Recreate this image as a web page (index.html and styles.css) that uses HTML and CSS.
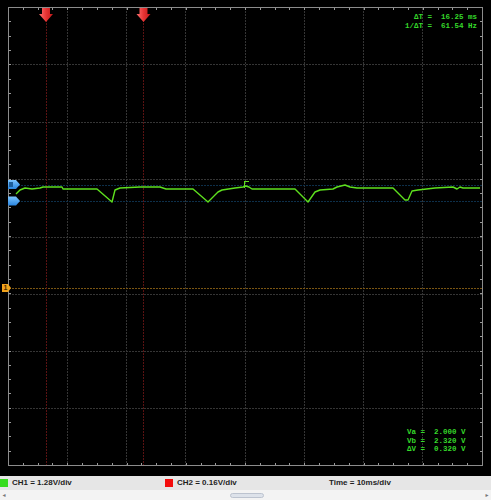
FILE: index.html
```html
<!DOCTYPE html>
<html>
<head>
<meta charset="utf-8">
<link rel="stylesheet" href="styles.css">
</head>
<body>
<div class="app">
  <div class="scope">
    <svg class="screen" width="491" height="476" viewBox="0 0 491 476" xmlns="http://www.w3.org/2000/svg">
      <defs>
        <linearGradient id="red" x1="0" y1="0" x2="1" y2="0">
          <stop offset="0" stop-color="#ff7070"/>
          <stop offset="0.5" stop-color="#e83434"/>
          <stop offset="1" stop-color="#c01818"/>
        </linearGradient>
        <linearGradient id="blue" x1="0" y1="0" x2="0" y2="1">
          <stop offset="0" stop-color="#7cc4ff"/>
          <stop offset="1" stop-color="#2a86e0"/>
        </linearGradient>
      </defs>
      <!-- grid -->
      <g stroke="#353535" stroke-width="1" stroke-dasharray="2 1">
        <line x1="67.5" y1="8" x2="67.5" y2="466"/>
        <line x1="126.5" y1="8" x2="126.5" y2="466"/>
        <line x1="185.5" y1="8" x2="185.5" y2="466"/>
        <line x1="245.5" y1="8" x2="245.5" y2="466"/>
        <line x1="304.5" y1="8" x2="304.5" y2="466"/>
        <line x1="363.5" y1="8" x2="363.5" y2="466"/>
        <line x1="422.5" y1="8" x2="422.5" y2="466"/>
        <line x1="9" y1="64.5" x2="482" y2="64.5"/>
        <line x1="9" y1="122.5" x2="482" y2="122.5"/>
        <line x1="9" y1="179.5" x2="482" y2="179.5"/>
        <line x1="9" y1="237.5" x2="482" y2="237.5"/>
        <line x1="9" y1="294.5" x2="482" y2="294.5"/>
        <line x1="9" y1="351.5" x2="482" y2="351.5"/>
        <line x1="9" y1="408.5" x2="482" y2="408.5"/>
      </g>
      <!-- reference lines -->
      <g stroke-width="1" stroke-dasharray="2 1">
        <line x1="9" y1="185.5" x2="482" y2="185.5" stroke="#0d2f4a"/>
        <line x1="9" y1="201.5" x2="482" y2="201.5" stroke="#0d2f4a"/>
        <line x1="9" y1="288.5" x2="482" y2="288.5" stroke="#7a5512"/>
        <line x1="46.5" y1="20" x2="46.5" y2="466" stroke="#5a1212"/>
        <line x1="143.5" y1="20" x2="143.5" y2="466" stroke="#5a1212"/>
      </g>
      <!-- frame -->
      <rect x="8.5" y="7.5" width="474" height="458" fill="none" stroke="#8c8c8c" stroke-width="1"/>
      <g id="ticks" stroke="#9a9a9a" stroke-width="1"></g>
      <!-- trace -->
      <polyline fill="none" stroke="#5ee01e" stroke-width="1.4" stroke-linejoin="round"
        points="16,194 20,190 25,188 32,189 40,188 43,187 62,187 63,189 97,189 112,202 115,190 120,188 140,187 160,187 166,189 193,189 208,202 218,192 222,190 235,188 243,187 246,186 249,187 252,189 262,189 295,189 308,202 315,192 320,190 333,189 337,187 345,185 350,187 357,188 393,188 405,200 408,200 412,191 418,190 435,188 453,187 457,189 460,187 463,188 480,188"/>
      <!-- trigger marker -->
      <g stroke="#5ee01e" stroke-width="1">
        <line x1="244.5" y1="181" x2="244.5" y2="188"/>
        <line x1="244.5" y1="181.5" x2="249" y2="181.5"/>
      </g>
      <!-- cursor arrows -->
      <path d="M42 8 H50 V14 H53 L46 22 L39 14 H42 Z" fill="url(#red)"/>
      <path d="M139.5 8 H147.5 V14 H150.5 L143.5 22 L136.5 14 H139.5 Z" fill="url(#red)"/>
      <!-- channel markers -->
      <path d="M8 180 H16 L20 184.5 L16 189 H8 Z" fill="url(#blue)"/>
      <rect x="9" y="182" width="4" height="5" fill="#1c5e9c"/>
      <path d="M8 196.5 H16 L20 201 L16 205.5 H8 Z" fill="url(#blue)"/>
      <path d="M2 284 H8 L11 288 L8 292 H2 Z" fill="#f2a31c"/>
    </svg>
    <span class="marker-label">1</span>
    <div class="readout readout-time">
      <div class="line">ΔT =  16.25 ms</div>
      <div class="line">1/ΔT =  61.54 Hz</div>
    </div>
    <div class="readout readout-volt">
      <div class="line">Va =  2.000 V</div>
      <div class="line">Vb =  2.320 V</div>
      <div class="line">ΔV =  0.320 V</div>
    </div>
  </div>
  <div class="status">
    <div class="item item-ch1"><span class="swatch swatch-green"></span><span>CH1 = 1.28V/div</span></div>
    <div class="item item-ch2"><span class="swatch swatch-red"></span><span>CH2 = 0.16V/div</span></div>
    <div class="item item-time"><span>Time = 10ms/div</span></div>
  </div>
  <div class="scroll">
    <span class="arrow">◂</span>
    <span class="track"><span class="thumb"></span></span>
    <span class="arrow">▸</span>
  </div>
</div>
<script>
  (function () {
    var g = document.getElementById('ticks');
    var ns = 'http://www.w3.org/2000/svg';
    function ln(x1, y1, x2, y2) {
      var l = document.createElementNS(ns, 'line');
      l.setAttribute('x1', x1); l.setAttribute('y1', y1);
      l.setAttribute('x2', x2); l.setAttribute('y2', y2);
      g.appendChild(l);
    }
    for (var i = 1; i < 32; i++) {
      var x = Math.round(8 + i * 474 / 32) + 0.5;
      ln(x, 8, x, 10); ln(x, 463, x, 465);
    }
    for (var j = 1; j < 32; j++) {
      var y = Math.round(7 + j * 458 / 32) + 0.5;
      ln(9, y, 11, y); ln(480, y, 482, y);
    }
  })();
</script>
</body>
</html>
```

FILE: styles.css
```css
html, body {
  margin: 0;
  padding: 0;
  background: #000;
}

.app {
  width: 491px;
  height: 500px;
  display: flex;
  flex-direction: column;
  overflow: hidden;
}

.scope {
  position: relative;
  height: 476px;
  background: #000;
  flex: none;
}

.screen {
  display: block;
}

.marker-label {
  position: absolute;
  left: 3px;
  top: 284px;
  width: 5px;
  font: bold 7px/8px "Liberation Sans", sans-serif;
  color: #4a2a00;
  text-align: center;
}

.readout {
  position: absolute;
  font-family: "Liberation Mono", "DejaVu Sans Mono", monospace;
  font-weight: bold;
  font-size: 7.5px;
  color: #35d82a;
}

.readout .line {
  white-space: pre;
}

.readout-time {
  right: 14px;
  top: 13px;
  line-height: 9px;
  text-align: right;
}

.readout-volt {
  left: 407px;
  top: 428px;
  line-height: 8.5px;
}

.status {
  height: 14px;
  flex: none;
  background: #e6e6e6;
  display: flex;
  align-items: center;
  font: 8px/10px "Liberation Sans", Arial, sans-serif;
  font-weight: bold;
  color: #1e1e1e;
}

.item {
  display: flex;
  align-items: center;
  gap: 4px;
}

.item-ch1 { width: 165px; }
.item-ch2 { width: 164px; }

.swatch {
  width: 8px;
  height: 8px;
  flex: none;
}

.swatch-green { background: #36dc1e; }
.swatch-red { background: #f40d0d; }

.scroll {
  height: 10px;
  flex: none;
  background: #f3f3f3;
  display: flex;
  align-items: center;
  font: 6px/10px "DejaVu Sans", sans-serif;
  color: #777;
}

.arrow {
  width: 8px;
  text-align: center;
  flex: none;
}

.track {
  flex: 1;
  height: 10px;
  display: flex;
  align-items: center;
  padding-left: 222px;
}

.thumb {
  width: 34px;
  height: 5px;
  border-radius: 3px;
  background: #dde2ea;
  border: 1px solid #bcc3cf;
  box-sizing: border-box;
}
```
